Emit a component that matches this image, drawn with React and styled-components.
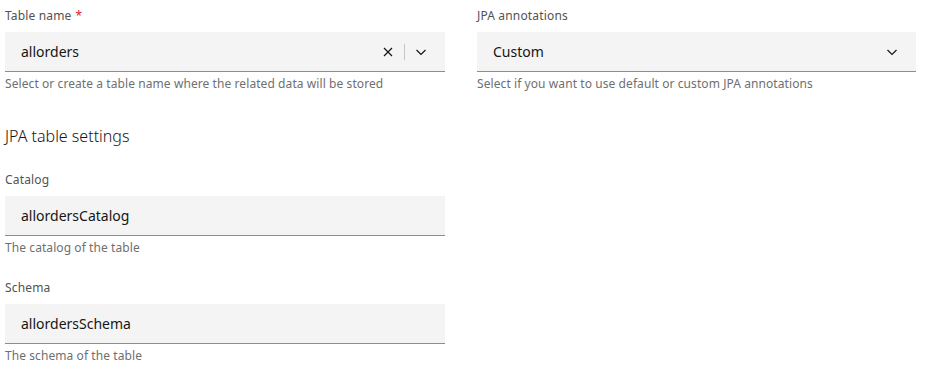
import React, { useState } from "react";
import styled, { createGlobalStyle } from "styled-components";

const GlobalStyle = createGlobalStyle`
  html, body {
    margin: 0;
    padding: 0;
    background: #ffffff;
  }
  body {
    font-family: "Noto Sans", "Liberation Sans", Arial, sans-serif;
    color: #161616;
  }
  * {
    box-sizing: border-box;
  }
`;

function CloseIcon() {
  return (
    <svg width="16" height="16" viewBox="0 0 16 16" fill="none">
      <path d="M4 4L12 12M12 4L4 12" stroke="#161616" strokeWidth="1.2" />
    </svg>
  );
}

function ChevronIcon() {
  return (
    <svg width="16" height="16" viewBox="0 0 16 16" fill="none">
      <path d="M3.5 6L8 10.5L12.5 6" stroke="#161616" strokeWidth="1.2" />
    </svg>
  );
}

function TextField({ label, required, value, helper, onChange }) {
  return (
    <Field>
      <Label>
        {label}
        {required && <Required>*</Required>}
      </Label>
      <InputBox>
        <Input value={value} onChange={(e) => onChange(e.target.value)} />
      </InputBox>
      <Helper>{helper}</Helper>
    </Field>
  );
}

function ComboField({ label, required, value, helper, onChange }) {
  return (
    <Field>
      <Label>
        {label}
        {required && <Required>*</Required>}
      </Label>
      <InputBox>
        <Input value={value} onChange={(e) => onChange(e.target.value)} />
        <IconButton type="button" onClick={() => onChange("")}>
          <CloseIcon />
        </IconButton>
        <Divider />
        <IconButton type="button">
          <ChevronIcon />
        </IconButton>
      </InputBox>
      <Helper>{helper}</Helper>
    </Field>
  );
}

function SelectField({ label, value, helper }) {
  return (
    <Field>
      <Label>{label}</Label>
      <InputBox>
        <SelectValue>{value}</SelectValue>
        <IconButton type="button">
          <ChevronIcon />
        </IconButton>
      </InputBox>
      <Helper>{helper}</Helper>
    </Field>
  );
}

export default function App() {
  const [tableName, setTableName] = useState("allorders");
  const [catalog, setCatalog] = useState("allordersCatalog");
  const [schema, setSchema] = useState("allordersSchema");

  return (
    <>
      <GlobalStyle />
      <Page>
        <TopRow>
          <ComboField
            label="Table name"
            required
            value={tableName}
            onChange={setTableName}
            helper="Select or create a table name where the related data will be stored"
          />
          <SelectField
            label="JPA annotations"
            value="Custom"
            helper="Select if you want to use default or custom JPA annotations"
          />
        </TopRow>
        <Section>
          <SectionTitle>JPA table settings</SectionTitle>
          <Stack>
            <TextField
              label="Catalog"
              value={catalog}
              onChange={setCatalog}
              helper="The catalog of the table"
            />
            <TextField
              label="Schema"
              value={schema}
              onChange={setSchema}
              helper="The schema of the table"
            />
          </Stack>
        </Section>
      </Page>
    </>
  );
}

const Page = styled.div`
  padding: 8px 10px 0 5px;
`;

const TopRow = styled.div`
  display: grid;
  grid-template-columns: 440px 439px;
  gap: 32px;
`;

const Section = styled.div`
  width: 440px;
  margin-top: 33px;
`;

const SectionTitle = styled.h3`
  margin: 0 0 25px;
  font-size: 16px;
  line-height: 22px;
  font-weight: 300;
  color: #161616;
`;

const Stack = styled.div`
  display: flex;
  flex-direction: column;
  gap: 24px;
`;

const Field = styled.div`
  display: flex;
  flex-direction: column;
`;

const Label = styled.label`
  font-size: 12px;
  line-height: 16px;
  letter-spacing: 0.16px;
  color: #525252;
  margin-bottom: 8px;
`;

const Required = styled.span`
  color: #da1e28;
  margin-left: 4px;
`;

const InputBox = styled.div`
  display: flex;
  align-items: center;
  height: 40px;
  background: #f4f4f4;
  border-bottom: 1px solid #8d8d8d;
  padding: 0 8px 0 16px;
`;

const Input = styled.input`
  flex: 1;
  min-width: 0;
  height: 100%;
  border: none;
  outline: none;
  background: transparent;
  padding: 0;
  font-family: inherit;
  font-size: 14px;
  letter-spacing: 0;
  color: #161616;
`;

const SelectValue = styled.div`
  flex: 1;
  font-size: 14px;
  letter-spacing: 0;
  color: #161616;
`;

const IconButton = styled.button`
  display: flex;
  align-items: center;
  justify-content: center;
  width: 32px;
  height: 40px;
  padding: 0;
  border: none;
  background: transparent;
  cursor: pointer;
`;

const Divider = styled.span`
  width: 1px;
  height: 16px;
  background: #c6c6c6;
`;

const Helper = styled.div`
  margin-top: 4px;
  font-size: 12px;
  line-height: 16px;
  letter-spacing: 0.08px;
  color: #6f6f6f;
`;
